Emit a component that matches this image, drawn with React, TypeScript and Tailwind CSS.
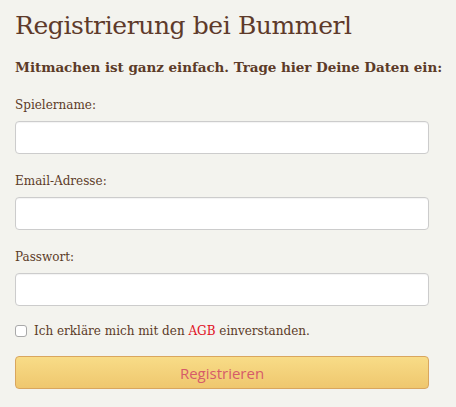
import React from "react";

const fields = [
  { label: "Spielername:", type: "text" },
  { label: "Email-Adresse:", type: "email" },
  { label: "Passwort:", type: "password" },
];

const App: React.FC = () => {
  return (
    <div className="min-h-[407px] w-[456px] bg-[#f3f3ee] text-[#5c3b28] font-['Georgia','DejaVu_Serif',serif]">
      <div className="px-[15px] pt-[9px]">
        <h1 className="text-[25px] leading-[34px] tracking-[-0.4px] text-[#5e3a2a]">Registrierung bei Bummerl</h1>
        <p className="mt-[14px] whitespace-nowrap text-[13.5px] font-bold leading-[20px] tracking-[-0.05px]">
          Mitmachen ist ganz einfach. Trage hier Deine Daten ein:
        </p>

        <form className="mt-[19px]" onSubmit={e => e.preventDefault()}>
          {fields.map(field => (
            <div key={field.label} className="mb-[18px]">
              <label className="block text-[12px] leading-[18px]">{field.label}</label>
              <input
                type={field.type}
                className="mt-[7px] block h-[33px] w-[414px] rounded-[4px] border border-[#cccccc] bg-white px-2 shadow-[inset_0_1px_1px_rgba(0,0,0,0.05)]"
              />
            </div>
          ))}

          <div className="-mt-[2px] flex items-center gap-[7px] text-[12px] leading-[18px]">
            <span className="h-[12px] w-[12px] rounded-[3px] border border-[#a9a9a9] bg-white" />
            <span>
              Ich erkläre mich mit den <a className="text-[#e0101f]">AGB</a> einverstanden.
            </span>
          </div>

          <button
            type="submit"
            className="mt-[16px] block h-[33px] w-[414px] rounded-[4px] border border-[#d9a65e] bg-gradient-to-b from-[#f8dc87] to-[#efc76e] pt-[2px] text-[15px] text-[#d65b69] font-['Open_Sans','DejaVu_Sans',sans-serif]"
          >
            Registrieren
          </button>
        </form>
      </div>
    </div>
  );
};

export default App;
